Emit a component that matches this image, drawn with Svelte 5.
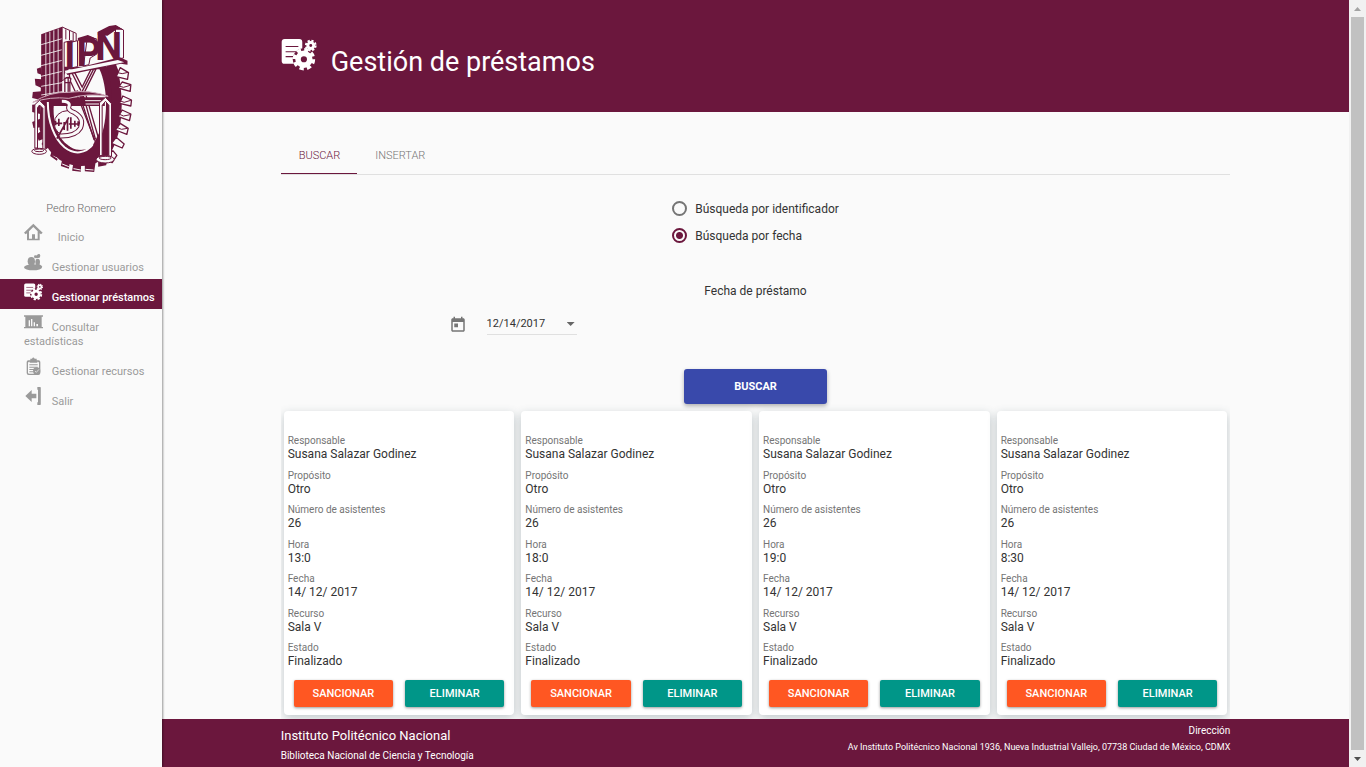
<script>
  const menu = [
    { label: 'Inicio', icon: 'home' },
    { label: 'Gestionar usuarios', icon: 'users' },
    { label: 'Gestionar préstamos', icon: 'loans', active: true },
    { label: 'Consultar estadísticas', icon: 'stats' },
    { label: 'Gestionar recursos', icon: 'resources' },
    { label: 'Salir', icon: 'exit' }
  ];
  const loans = ['13:0', '18:0', '19:0', '8:30'].map((hora) => [
    ['Responsable', 'Susana Salazar Godinez'],
    ['Propósito', 'Otro'],
    ['Número de asistentes', '26'],
    ['Hora', hora],
    ['Fecha', '14/ 12/ 2017'],
    ['Recurso', 'Sala V'],
    ['Estado', 'Finalizado']
  ]);
  let tab = $state('buscar');
  let mode = $state('fecha');
  let date = $state('12/14/2017');
</script>

{#snippet loansIcon()}
  <svg viewBox="0 0 108 98" aria-hidden="true">
    <rect x="1" y="0" width="63" height="76" rx="9" fill="currentColor" />
    <path d="M13 23H52M13 39H46M13 54H38" stroke="#6b173d" stroke-width="3.5" />
    <circle cx="69" cy="62" r="34" fill="#6b173d" />
    <circle cx="69" cy="62" r="18" fill="none" stroke="currentColor" stroke-width="17" />
    <circle cx="69" cy="62" r="29" fill="none" stroke="currentColor" stroke-width="11" stroke-dasharray="13 9.800" />
    <circle cx="90" cy="20" r="9" fill="none" stroke="currentColor" stroke-width="9" />
    <circle cx="90" cy="20" r="15" fill="none" stroke="currentColor" stroke-width="6" stroke-dasharray="6.800 5" />
  </svg>
{/snippet}

<div class="app">
  <aside>
    <svg class="crest" viewBox="90 72 308 450" role="img" aria-label="Escudo">
      <g fill="#6b173d">
        <path d="M122 202l-12 4 2 14 12 4zM124 238l-20-2 2 20 18 8zM124 274l-26 2-2 18 26 6zM120 312l-24 2 0 22 24 6zM120 356l-24 10 4 18 24-2zM122 394l-14 10 8 18 20-8z" />
        <path d="M136 414l-12 18 14 16 18-14zM160 436l-10 32 20 14 14-28zM190 458l-8 40 24 8 6-38zM222 470l-6 42 26 3 2-42zM254 476l0 38 28 2 6-42zM294 466l0 34 24-4 8-36z" />
      </g>
      <path d="M124 200h200l20 20q26 110-4 220-40 62-104 58-90-8-118-110z" fill="#6b173d" />
      <path d="M206 208h92c24 50 28 150 0 214-24 34-72 34-104 6-44-40-50-160 12-220z" fill="#fafafa" />
      <path d="M318 190q36 120 0 280l18-20q46-90 18-240l-8-20z" fill="#6b173d" />
      <g fill="#fafafa" stroke="#6b173d" stroke-width="4" stroke-linejoin="round">
        <path d="M360 203l25 15-3 20-34-8zM366 246l26 8-2 20-36-10zM368 288l26 12-2 18-34-8zM366 330l26 12-4 20-34-12zM360 370l24 15-4 18-34-13zM348 412l24 20-6 12-32-14zM338 452l12 14-14 22-24-14z" />
      </g>
      <path d="M352 218l14 3 18-4M356 258l14 4 20-6M358 302l14 5 20-6M356 342l14 6 20-4M350 382l14 6 18-3" fill="none" stroke="#6b173d" stroke-width="3" />
      <g stroke="#fafafa" stroke-width="3">
        <path d="M158 466l16 10M186 492l20 8M220 506l22 4M256 508l24 2" />
      </g>
      <g fill="#fafafa" stroke="#6b173d" stroke-width="4">
        <path d="M206 214l14-3 26 50 26-52 16-3-34 68 42 144-10 8-50-128-26-56z" />
        <path d="M214 216l28 56M280 208l-34 66 40 144M240 290l42 130" fill="none" />
      </g>
      <path d="M148 292h166v26H148z" fill="#6b173d" />
      <path d="M250 302h52M250 312h52" stroke="#fafafa" stroke-width="3" />
      <path d="M123 103l63-23v214l-63 6z" fill="#6b173d" />
      <path d="M123 134l63-18M123 166l63-17M123 197l63-16M123 229l63-15M123 259l63-11M123 285l63-10M137 100v195M149 95v200M161 91v202M174 86v208" stroke="#fafafa" stroke-width="2.5" fill="none" />
      <path d="M186 81l42 19v28l-14-6-22 5v112l-6 3z" fill="#fafafa" stroke="#6b173d" stroke-width="3" />
      <path d="M197 88v30M208 92v28M219 97v26" stroke="#6b173d" stroke-width="3" />
      <g fill="#fafafa" stroke="#6b173d" stroke-width="3">
        <path d="M212 127l20-5v78l-20 4zM262 108l28 10v44l-20 12-4 20-16 4zM346 78l24 12v84l-24 4z" />
      </g>
      <text class="letters" x="192 229 285" y="206 197 180">IPN</text>
      <path d="M233 114l30-9 28 12-20 3-38 2zM293 95l34-17 20-3 23 14-22 0-26 18-29-2z" fill="#6b173d" />
      <path d="M193 214l166-42 23 10v12l-20-3-160 34z" fill="#6b173d" />
      <path d="M194 212l159-32 19 7-176 34z" fill="#fafafa" />
      <path d="M138 300c-4 72 20 126 64 152 44 18 70 0 78-20l20-40 10 60-30 30-60 8-60-22-32-60 0-100z" fill="#6b173d" />
      <path d="M202 432c26 16 54 10 72-6-8 26-50 34-72 6z" fill="#fafafa" />
      <path d="M252 318q0-30-24-44" fill="none" stroke="#6b173d" stroke-width="10" />
      <path d="M143 306c0 62 20 110 50 136 30 24 64 18 84-8" fill="none" stroke="#fafafa" stroke-width="6" />
      <path d="M204 232v74M192 248h20M194 236q10-7 18 0l-3 14v40q-8 8-15 0v-40z" fill="#fafafa" stroke="#6b173d" stroke-width="4" />
      <path d="M98 307q51-32 106-30 70-8 120 12-60-11-118 6-57-6-108 12z" fill="#6b173d" stroke="#cfaabb" stroke-width="3" />
      <ellipse cx="202" cy="370" rx="40" ry="38" fill="#fafafa" stroke="#6b173d" stroke-width="3" />
      <path d="M166 362v14M176 356v22M162 370h24M192 366v24M202 356v36M212 352v34M224 362v18M234 364v14M206 372h32M170 416l36-64" fill="none" stroke="#6b173d" stroke-width="5" />
      <path d="M185 304q25 0 22 13-7 13 16 21 30 17 18 46-14 25-61 24" fill="none" stroke="#6b173d" stroke-width="15" />
      <path d="M185 304q25 0 22 13-7 13 16 21 30 17 18 46-14 25-61 24" fill="none" stroke="#fafafa" stroke-width="9" />
      <g stroke="#6b173d" stroke-width="3" fill="#fafafa">
        <path d="M104 314l14-13 17 17v130h-7V325l-10-10-6 8v121h-8zM298 308l18-16 18 19v158h-8V316l-10-12-10 12v151h-8z" />
        <ellipse cx="117" cy="454" rx="22" ry="9" /><ellipse cx="117" cy="451" rx="14" ry="4" />
        <ellipse cx="315" cy="478" rx="27" ry="11" /><ellipse cx="315" cy="474" rx="18" ry="5" />
      </g>
    </svg>
    <p class="user">Pedro Romero</p>
    <nav>
      {#each menu as item}
        <a href="#{item.icon}" class:active={item.active} class:first={item.icon === 'home'}>
          {#if item.icon === 'loans'}
            {@render loansIcon()}
          {:else}
            <svg viewBox="0 0 57 54" fill="currentColor" aria-hidden="true">
              {#if item.icon === 'home'}
                <path d="M0 29L28 2l28 27-5 5-4-3v21H9V31l-4 3zM15 25v22h9V34h9v13h8V25L28 12z" fill-rule="evenodd" />
              {:else if item.icon === 'users'}
                <ellipse cx="27" cy="43" rx="27" ry="9" /><ellipse cx="22" cy="25" rx="11" ry="13" /><ellipse cx="41" cy="27" rx="7" ry="10" />
                <path d="M17 34h12v8H17zM37 33h8l10 7-5 5H33z" /><circle cx="44" cy="8" r="5" /><circle cx="34" cy="11" r="4" /><path d="M33 9l14-5v10l-12 2z" />
              {:else if item.icon === 'stats'}
                <path d="M0 7h57v4h-4v31h4v4H0v-4h4V11H0zM14 22v18h4V22zM21 18v22h4V18zM29 28v12h4V28zM37 33v7h5v-7z" fill-rule="evenodd" />
              {:else if item.icon === 'resources'}
                <path d="M19 5h5q4-7 8 0h6v5h6q5 0 5 5v33q0 6-6 6H14q-6 0-6-6V15q0-5 5-5h6zM17 14q-5 0-5 4v29q0 3 4 3h24q5 0 5-4V18q0-4-5-4v3H17z" fill-rule="evenodd" />
                <path d="M16 22h25v3H16zM16 29h25v3H16zM16 36h17v3H16zM16 43h11v3H16z" /><circle cx="38" cy="42" r="11" /><path d="M33 42l4 4 8-9" fill="none" stroke="#fafafa" stroke-width="2" />
              {:else}
                <path d="M4 27L23 9v11h14v14H23v11zM40 0h9v54h-9v-8h4V8h-4z" /><path d="M42 1h8v52h-8z" />
              {/if}
            </svg>
          {/if}
          <span>{item.label}</span>
        </a>
      {/each}
    </nav>
  </aside>

  <div class="page">
    <header>
      {@render loansIcon()}
      <h1>Gestión de préstamos</h1>
    </header>

    <main>
      <div class="tabs" role="tablist">
        <button role="tab" aria-selected={tab === 'buscar'} onclick={() => (tab = 'buscar')}>BUSCAR</button>
        <button role="tab" aria-selected={tab === 'insertar'} onclick={() => (tab = 'insertar')}>INSERTAR</button>
      </div>

      <div class="modes">
        <label><input type="radio" name="mode" value="id" bind:group={mode} />Búsqueda por identificador</label>
        <label><input type="radio" name="mode" value="fecha" bind:group={mode} />Búsqueda por fecha</label>
      </div>

      <label class="date-label" for="date">Fecha de préstamo</label>
      <div class="date">
        <svg viewBox="0 0 24 24" fill="currentColor" aria-hidden="true">
          <path d="M19 3h-1V1h-2v2H8V1H6v2H5c-1.100 0-2 .9-2 2v14c0 1.100.9 2 2 2h14c1.100 0 2-.9 2-2V5c0-1.100-.9-2-2-2zm0 16H5V8h14v11zM7 10h5v5H7z" />
        </svg>
        <div class="field">
          <input id="date" type="text" bind:value={date} />
          <button aria-label="Abrir calendario"></button>
        </div>
      </div>

      <button class="search">BUSCAR</button>

      <section class="cards">
        {#each loans as loan}
          <article>
            <dl>
              {#each loan as [name, value]}
                <div><dt>{name}</dt><dd>{value}</dd></div>
              {/each}
            </dl>
            <div class="actions">
              <button class="sanction">SANCIONAR</button>
              <button class="remove">ELIMINAR</button>
            </div>
          </article>
        {/each}
      </section>
    </main>

    <footer>
      <div>
        <p class="name">Instituto Politécnico Nacional</p>
        <p>Biblioteca Nacional de Ciencia y Tecnología</p>
      </div>
      <address>
        <p>Dirección</p>
        <p class="small">Av Instituto Politécnico Nacional 1936, Nueva Industrial Vallejo, 07738 Ciudad de México, CDMX</p>
      </address>
    </footer>
  </div>

  <div class="scrollbar" aria-hidden="true">
    <i class="up"></i>
    <i class="thumb"></i>
    <i class="down"></i>
  </div>
</div>

<style>
  :global(body) {
    margin: 0;
    background: #fafafa;
  }
  .app {
    display: flex;
    min-height: 100vh;
    font-family: Roboto, sans-serif;
    font-size: 12px;
    line-height: 14px;
    color: #333;
  }
  .app :global(*) {
    box-sizing: border-box;
  }
  p, h1, dl, dd {
    margin: 0;
  }
  button, input {
    font: inherit;
    color: inherit;
    border: 0;
    padding: 0;
    margin: 0;
    background: none;
  }
  button {
    cursor: pointer;
  }
  aside {
    width: 162px;
    flex: none;
    padding-top: 24px;
    box-shadow: 1px 0 2px rgba(0, 0, 0, 0.4);
    z-index: 1;
  }
  .crest {
    display: block;
    width: 103px;
    height: 150px;
    margin: 0 auto;
  }
  .letters {
    font-family: Roboto, sans-serif;
    font-weight: 700;
    font-size: 114px;
    fill: #6b173d;
  }
  .user {
    margin: 28px 0 3px;
    font-size: 11px;
    font-weight: 300;
    text-align: center;
    color: #666;
  }
  nav a {
    display: block;
    padding: 4px 4px 4px 24px;
    font-size: 11px;
    color: #9a9a9a;
    text-decoration: none;
  }
  nav :global(svg) {
    width: 19px;
    height: 18px;
    margin-right: 6px;
  }
  nav .first svg {
    margin-right: 12px;
  }
  nav .active {
    background: #6b173d;
    color: #fff;
    font-weight: 500;
  }
  .page {
    flex: 1;
    min-width: 0;
    display: flex;
    flex-direction: column;
  }
  header {
    display: flex;
    align-items: center;
    gap: 14px;
    height: 112px;
    padding: 0 10%;
    background: #6b173d;
    color: #fff;
  }
  header :global(svg) {
    width: 36px;
    height: 32px;
    margin-bottom: 2px;
  }
  h1 {
    padding-top: 12px;
    font-size: 27px;
    line-height: 32px;
    font-weight: 400;
  }
  main {
    flex: 1;
    display: flex;
    flex-direction: column;
    padding: 24px 10% 0;
  }
  .tabs {
    display: flex;
    border-bottom: 1px solid #e0e0e0;
  }
  .tabs button {
    height: 38px;
    padding: 2px 17px 0 18px;
    border-bottom: 1px solid transparent;
    font-size: 11px;
    font-weight: 300;
    color: #757575;
  }
  .tabs [aria-selected='true'] {
    border-color: #6b173d;
    color: #6b173d;
  }
  .modes {
    align-self: center;
    display: grid;
    gap: 12px;
    margin-top: 26px;
  }
  .modes label {
    display: flex;
    align-items: center;
    gap: 8px;
    height: 15px;
  }
  .modes input {
    appearance: none;
    width: 15px;
    height: 15px;
    border: 2px solid #757575;
    border-radius: 50%;
  }
  .modes input:checked {
    border-color: #6b173d;
    background: radial-gradient(circle, #6b173d 3px, transparent 4px);
  }
  .date-label {
    align-self: center;
    margin: 41px 0 16px;
  }
  .date {
    display: flex;
    align-items: center;
    gap: 20px;
    padding-left: 18%;
    font-size: 11px;
  }
  .date svg {
    width: 18px;
    height: 18px;
    margin-left: -3px;
    color: #757575;
  }
  .field {
    display: flex;
    align-items: center;
    width: 90px;
    height: 21px;
    border-bottom: 1px solid #e0e0e0;
  }
  .field input {
    flex: 1;
    min-width: 0;
  }
  .field button {
    width: 8px;
    height: 4px;
    margin: 0 2px;
    background: #666;
    clip-path: polygon(0 0, 100% 0, 50% 100%);
  }
  .search {
    align-self: center;
    width: 143px;
    height: 35px;
    margin: 34px 0 0;
    border-radius: 3px;
    background: #3949ab;
    color: #fff;
    font-size: 11px;
    font-weight: 700;
    box-shadow: 0 2px 4px rgba(0, 0, 0, 0.3);
  }
  .cards {
    display: grid;
    grid-template-columns: repeat(4, 1fr);
    gap: 7px;
    padding: 7px 3px 4px;
    overflow: hidden;
  }
  article {
    padding: 23px 4px 8px;
    border-radius: 4px;
    background: #fff;
    box-shadow: 0 3px 10px rgba(60, 85, 95, 0.3);
  }
  dl {
    display: flex;
    flex-direction: column;
    justify-content: space-between;
    min-height: 234px;
  }
  dt {
    font-size: 10px;
    line-height: 13px;
    color: #757575;
  }
  .actions {
    display: grid;
    grid-template-columns: 1fr 1fr;
    gap: 12px;
    margin: 12px 6px 0;
  }
  .actions button {
    height: 27px;
    border-radius: 2px;
    color: #fff;
    font-size: 11px;
    font-weight: 500;
    box-shadow: 0 1px 3px rgba(0, 0, 0, 0.4);
  }
  .sanction {
    background: #ff5722;
  }
  .remove {
    background: #009688;
  }
  footer {
    display: flex;
    justify-content: space-between;
    min-height: 48px;
    padding: 5px 10% 3px;
    background: #6b173d;
    color: #fff;
    font-size: 10px;
  }
  .name {
    margin: 5px 0 6px;
    font-size: 13px;
  }
  address {
    font-style: normal;
    text-align: right;
  }
  .small {
    margin-top: 2px;
    font-size: 9px;
  }
  .scrollbar {
    position: sticky;
    top: 0;
    display: flex;
    flex-direction: column;
    flex: none;
    width: 17px;
    height: 100vh;
    padding: 0 2px;
    background: #f1f1f1;
  }
  .thumb {
    flex: 1;
    background: #c1c1c1;
  }
  .up, .down {
    flex: none;
    width: 7px;
    height: 4px;
    margin: 7px 3px 6px;
    background: #a3a3a3;
    clip-path: polygon(50% 0, 100% 100%, 0 100%);
  }
  .down {
    background: #505050;
    clip-path: polygon(0 0, 100% 0, 50% 100%);
  }
</style>
